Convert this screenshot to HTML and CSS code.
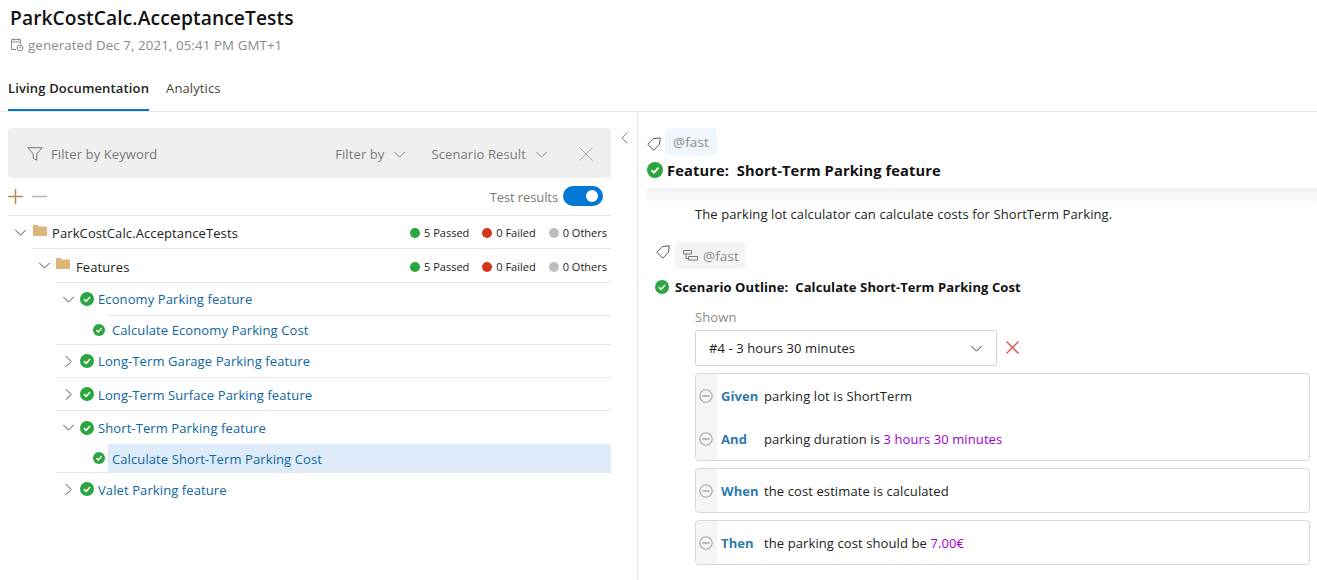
FILE: index.html
```html
<!DOCTYPE html>
<html lang="en">
<head>
<meta charset="UTF-8">
<meta name="viewport" content="width=device-width, initial-scale=1.0">
<title>ParkCostCalc.AcceptanceTests</title>
<link rel="stylesheet" href="styles.css">
</head>
<body>

<svg class="defs" width="0" height="0">
    <symbol id="check" viewBox="0 0 14 14">
        <circle cx="7" cy="7" r="7" fill="#2aa63e"/>
        <path d="M3.9 7.2l2.2 2.1 4-4.3" fill="none" stroke="#fff" stroke-width="1.6"/>
    </symbol>
    <symbol id="folder" viewBox="0 0 14 11">
        <path d="M0 1a1 1 0 0 1 1-1h3.6l1.4 1.5h7a1 1 0 0 1 1 1V10a1 1 0 0 1-1 1H1a1 1 0 0 1-1-1z" fill="#dcb67a"/>
    </symbol>
    <symbol id="down" viewBox="0 0 14 8">
        <path d="M1 1l6 6 6-6" fill="none" stroke="currentColor" stroke-width="1"/>
    </symbol>
    <symbol id="right" viewBox="0 0 8 14">
        <path d="M1 1l6 6-6 6" fill="none" stroke="currentColor" stroke-width="1"/>
    </symbol>
    <symbol id="tag" viewBox="0 0 14 14">
        <path d="M.8 7.3L6.6 1.6 13.2.8l-.6 6.4-5.8 5.9z M10 4.2h.01" fill="none" stroke="#555" stroke-width="1"/>
    </symbol>
    <symbol id="minus" viewBox="0 0 14 14">
        <circle cx="7" cy="7" r="6.2" fill="none" stroke="#a6a6a6" stroke-width="1.1"/>
        <path d="M3.4 7h7.2" stroke="#8a8a8a" stroke-width="1.1"/>
    </symbol>
</svg>

<header class="page-head">
    <h1>ParkCostCalc.AcceptanceTests</h1>
    <div class="generated">
        <svg class="cal" width="14" height="14" viewBox="0 0 14 14" fill="none" stroke="#8a8a8a">
            <path d="M6 11.5H1.5v-10h9V6M1.5 4h9M3.5 .5v2M8.5 .5v2"/>
            <circle cx="10" cy="10" r="3"/>
            <path d="M10 8.5V10h1.5"/>
        </svg>
        generated Dec 7, 2021, 05:41 PM GMT+1
    </div>
    <nav class="tabs">
        <a class="tab active">Living Documentation</a>
        <a class="tab">Analytics</a>
    </nav>
</header>

<main class="content">
    <section class="left">
        <div class="filter-bar">
            <svg class="funnel" width="16" height="14" viewBox="0 0 18 16" fill="none" stroke="#666">
                <path d="M.8 .8h16.4L11 8v7l-4-2V8z"/>
            </svg>
            <span class="keyword">Filter by Keyword</span>
            <span class="filter-drop">Filter by <svg class="caret" width="13" height="7"><use href="#down"/></svg></span>
            <span class="filter-drop">Scenario Result <svg class="caret" width="13" height="7"><use href="#down"/></svg></span>
            <svg class="clear" width="14" height="14" viewBox="0 0 14 14" stroke="#aaa"><path d="M.5 .5l13 13M13.5 .5l-13 13"/></svg>
        </div>
        <div class="tool-row">
            <svg width="15" height="15" viewBox="0 0 15 15" stroke="#b58a52" stroke-width="1.5"><path d="M7.5 0v15M0 7.5h15"/></svg>
            <svg class="collapse" width="15" height="15" viewBox="0 0 15 15" stroke="#b5b5b5" stroke-width="1.5"><path d="M0 7.5h15"/></svg>
            <span class="results-label">Test results</span>
            <span class="switch"><span class="knob"></span></span>
        </div>

        <div class="tree">
            <div class="row lvl0">
                <svg class="chev-d" width="13" height="7"><use href="#down"/></svg>
                <svg class="folder" width="14" height="11"><use href="#folder"/></svg>
                <span class="name">ParkCostCalc.AcceptanceTests</span>
                <div class="counts">
                    <span><i class="dot pass"></i>5 Passed</span>
                    <span><i class="dot fail"></i>0 Failed</span>
                    <span><i class="dot other"></i>0 Others</span>
                </div>
            </div>
            <div class="row lvl1 tall">
                <svg class="chev-d" width="13" height="7"><use href="#down"/></svg>
                <svg class="folder" width="14" height="11"><use href="#folder"/></svg>
                <span class="name">Features</span>
                <div class="counts">
                    <span><i class="dot pass"></i>5 Passed</span>
                    <span><i class="dot fail"></i>0 Failed</span>
                    <span><i class="dot other"></i>0 Others</span>
                </div>
            </div>
            <div class="row lvl2">
                <svg class="chev-d" width="13" height="7"><use href="#down"/></svg>
                <svg class="ok" width="14" height="14"><use href="#check"/></svg>
                <a class="link">Economy Parking feature</a>
            </div>
            <div class="row lvl3 short">
                <svg class="ok-small" width="12" height="12"><use href="#check"/></svg>
                <a class="link">Calculate Economy Parking Cost</a>
            </div>
            <div class="row lvl2">
                <svg class="chev-r" width="7" height="13"><use href="#right"/></svg>
                <svg class="ok" width="14" height="14"><use href="#check"/></svg>
                <a class="link">Long-Term Garage Parking feature</a>
            </div>
            <div class="row lvl2 nudge">
                <svg class="chev-r" width="7" height="13"><use href="#right"/></svg>
                <svg class="ok" width="14" height="14"><use href="#check"/></svg>
                <a class="link">Long-Term Surface Parking feature</a>
            </div>
            <div class="row lvl2 tall">
                <svg class="chev-d" width="13" height="7"><use href="#down"/></svg>
                <svg class="ok" width="14" height="14"><use href="#check"/></svg>
                <a class="link">Short-Term Parking feature</a>
            </div>
            <div class="row lvl3 short selected nudge">
                <svg class="ok-small" width="12" height="12"><use href="#check"/></svg>
                <a class="link">Calculate Short-Term Parking Cost</a>
            </div>
            <div class="row lvl2 nudge">
                <svg class="chev-r" width="7" height="13"><use href="#right"/></svg>
                <svg class="ok" width="14" height="14"><use href="#check"/></svg>
                <a class="link">Valet Parking feature</a>
            </div>
        </div>
    </section>

    <div class="splitter">
        <svg class="back" width="7" height="12" viewBox="0 0 8 13" fill="none" stroke="#666"><path d="M7 .5l-6 6 6 6"/></svg>
    </div>

    <section class="right">
        <div class="feature-head">
            <div class="tag-line">
                <svg class="tag-icon" width="14" height="14"><use href="#tag"/></svg>
                <span class="chip blue">@fast</span>
            </div>
            <h2><svg width="16" height="16"><use href="#check"/></svg>Feature:&nbsp; Short-Term Parking feature</h2>
        </div>
        <p class="desc">The parking lot calculator can calculate costs for ShortTerm Parking.</p>

        <div class="tag-line scenario-tags">
            <svg class="tag-icon up" width="14" height="14"><use href="#tag"/></svg>
            <span class="chip grey">
                <svg width="15" height="11" viewBox="0 0 15 11" fill="none" stroke="#777"><path d="M.5 .5h8V4h-8zM5.5 6.5h9V10h-9zM3 4v4.500h2.500"/></svg>
                @fast
            </span>
        </div>
        <h3><svg width="14" height="14"><use href="#check"/></svg>Scenario Outline:&nbsp; Calculate Short-Term Parking Cost</h3>

        <div class="outline">
            <label class="shown">Shown</label>
            <div class="select-line">
                <div class="select">#4 - 3 hours 30 minutes <svg width="13" height="7"><use href="#down"/></svg></div>
                <svg class="remove" width="13" height="13" viewBox="0 0 14 14" stroke="#e0514a" stroke-width="1.4"><path d="M.5 .5l13 13M13.5 .5l-13 13"/></svg>
            </div>
            <div class="steps">
                <div class="step"><svg width="14" height="14"><use href="#minus"/></svg><b>Given</b><span>parking lot is ShortTerm</span></div>
                <div class="step"><svg width="14" height="14"><use href="#minus"/></svg><b>And</b><span>parking duration is <em>3 hours 30 minutes</em></span></div>
            </div>
            <div class="steps">
                <div class="step"><svg width="14" height="14"><use href="#minus"/></svg><b>When</b><span>the cost estimate is calculated</span></div>
            </div>
            <div class="steps">
                <div class="step"><svg width="14" height="14"><use href="#minus"/></svg><b>Then</b><span>the parking cost should be <em>7.00€</em></span></div>
            </div>
        </div>
    </section>
</main>

</body>
</html>
```

FILE: styles.css
```css
* {
    box-sizing: border-box;
}
html, body {
    height: 100%;
}
body {
    margin: 0;
    font-family: "Open Sans", "Noto Sans", Arial, sans-serif;
    font-size: 13px;
    letter-spacing: 0.1px;
    color: #222;
    background: #fff;
    overflow: hidden;
    display: flex;
    flex-direction: column;
}
.defs {
    position: absolute;
}
svg {
    flex: none;
    display: block;
}

/* page header */
.page-head {
    height: 112px;
    padding: 5px 0 0 0;
    border-bottom: 1px solid #e8e8e8;
    flex: none;
}
h1 {
    margin: 0 0 0 10px;
    font-size: 19.2px;
    line-height: 26px;
    font-weight: 600;
    color: #111;
}
.generated {
    display: flex;
    align-items: center;
    gap: 4px;
    margin: 4px 0 0 10px;
    font-size: 13.3px;
    line-height: 20px;
    color: #8a8a8a;
}
.tabs {
    display: flex;
    gap: 17px;
    margin: 20px 0 0 8px;
}
.tab {
    height: 36px;
    line-height: 26px;
    color: #444;
}
.tab.active {
    color: #222;
    font-weight: 600;
    letter-spacing: 0.15px;
    border-bottom: 2px solid #0078d4;
}

.content {
    flex: 1;
    display: flex;
    min-height: 0;
}

/* left side */
.left {
    width: 637px;
    flex: none;
    padding: 16px 26px 0 8px;
}
.filter-bar {
    height: 50px;
    display: flex;
    align-items: center;
    padding: 2px 18px 0 19px;
    background: #efefef;
    border-radius: 4px;
    color: #7a7a7a;
}
.funnel {
    margin-right: 8px;
}
.keyword {
    flex: 1;
}
.filter-drop {
    display: flex;
    align-items: center;
    gap: 9px;
    margin-right: 25px;
}
.filter-drop:nth-of-type(3) {
    margin-right: 31px;
}
.tool-row {
    height: 37px;
    display: flex;
    align-items: center;
    gap: 9px;
    padding-right: 8px;
}
.results-label {
    margin-left: auto;
    margin-right: -4px;
    letter-spacing: -0.1px;
    color: #7a7a7a;
}
.switch {
    width: 40px;
    height: 20px;
    margin-top: -2px;
    border-radius: 10px;
    background: #0078d4;
    display: flex;
    align-items: center;
    justify-content: flex-end;
    padding-right: 5px;
}
.knob {
    width: 12px;
    height: 12px;
    border-radius: 50%;
    background: #fff;
}

/* tree */
.row {
    height: 33px;
    display: flex;
    align-items: center;
    border-top: 1px solid #e8e8e8;
}
.row.tall {
    height: 34px;
}
.row.short {
    height: 29px;
}
.lvl0 {
    padding: 1px 0 0 6px;
}
.lvl1 {
    margin-left: 24px;
    padding-left: 6px;
}
.lvl2 {
    margin-left: 48px;
    padding-left: 6px;
}
.lvl3 {
    margin-left: 100px;
}
.chev-d {
    margin-right: 5px;
    color: #333;
}
.lvl0 .chev-d {
    margin-right: 6px;
}
.chev-r {
    margin: 0 8px 0 3px;
    color: #333;
}
.folder {
    margin: -5px 6px 0 0;
}
.lvl0 .folder {
    margin-right: 5px;
}
.lvl1 .name, .lvl1 .counts {
    padding-top: 2px;
}
.ok {
    margin-right: 4px;
}
.ok-small {
    margin: 0 7px 0 -15px;
}
.name {
    color: #222;
}
.link {
    color: #0e659f;
}
.nudge .link {
    padding-top: 2px;
}
.row.selected {
    height: 28px;
    background: #deecf9;
    border-top: 0;
}
.counts {
    margin-left: auto;
    display: flex;
    gap: 13px;
    font-size: 11px;
    letter-spacing: 0;
    padding-right: 4px;
}
.counts span {
    display: flex;
    align-items: center;
    gap: 4px;
}
.dot {
    width: 10px;
    height: 10px;
    border-radius: 50%;
}
.dot.pass {
    background: #2aa63e;
}
.dot.fail {
    background: #d4351c;
}
.dot.other {
    background: #bdbdbd;
}

/* splitter */
.splitter {
    width: 1px;
    background: #e8e8e8;
    flex: none;
    position: relative;
}
.back {
    position: absolute;
    left: -16px;
    top: 20px;
}

/* right side */
.right {
    flex: 1;
    padding: 16px 7px 0 9px;
    min-width: 0;
}
.feature-head {
    height: 60px;
    margin-right: -7px;
    position: relative;
}
.feature-head::after {
    content: "";
    position: absolute;
    left: 0;
    right: 0;
    top: 60px;
    height: 20px;
    background: linear-gradient(#f3f3f3, #fff);
}
.tag-line {
    display: flex;
    align-items: flex-end;
    gap: 4px;
    height: 27px;
}
.tag-icon {
    margin-bottom: 4px;
}
.tag-icon.up {
    margin-bottom: 10px;
}
.chip {
    height: 27px;
    padding: 0 8px;
    border-radius: 4px;
    display: flex;
    align-items: center;
    gap: 5px;
    font-size: 13.5px;
    color: #8a8a8a;
}
.chip.blue {
    background: #eff6fc;
}
.chip.grey {
    background: #f4f4f4;
    padding-right: 6px;
}
h2 {
    display: flex;
    align-items: center;
    gap: 4px;
    margin: 5px 0 0 0;
    font-size: 14.7px;
    line-height: 20px;
    font-weight: 700;
    color: #111;
}
.desc {
    margin: 16px 0 0 48px;
    line-height: 20px;
    position: relative;
}
.scenario-tags {
    margin: 18px 0 0 9px;
    gap: 5px;
}
h3 {
    display: flex;
    align-items: center;
    gap: 6px;
    margin: 8px 0 0 8px;
    font-size: 13px;
    line-height: 20px;
    font-weight: 700;
    color: #111;
}
.outline {
    margin: 10px 0 0 48px;
}
.shown {
    display: block;
    line-height: 20px;
    color: #8a8a8a;
}
.select-line {
    display: flex;
    align-items: center;
    gap: 9px;
    margin: 3px 0 7px 0;
}
.select {
    width: 302px;
    height: 36px;
    display: flex;
    align-items: center;
    justify-content: space-between;
    padding: 0 13px;
    border: 1px solid #d4d4d4;
    border-radius: 3px;
}
.remove {
    margin-top: -2px;
}
.steps {
    border: 1px solid #d8d8d8;
    border-radius: 4px;
    margin-bottom: 7px;
    background: linear-gradient(to right, #f5f5f5 21px, #fff 21px);
}
.step {
    height: 43px;
    display: flex;
    align-items: center;
    padding-left: 3px;
}
.step b {
    width: 43px;
    margin-left: 8px;
    color: #2f7bab;
}
.step em {
    font-style: normal;
    color: #a000d0;
}
```
